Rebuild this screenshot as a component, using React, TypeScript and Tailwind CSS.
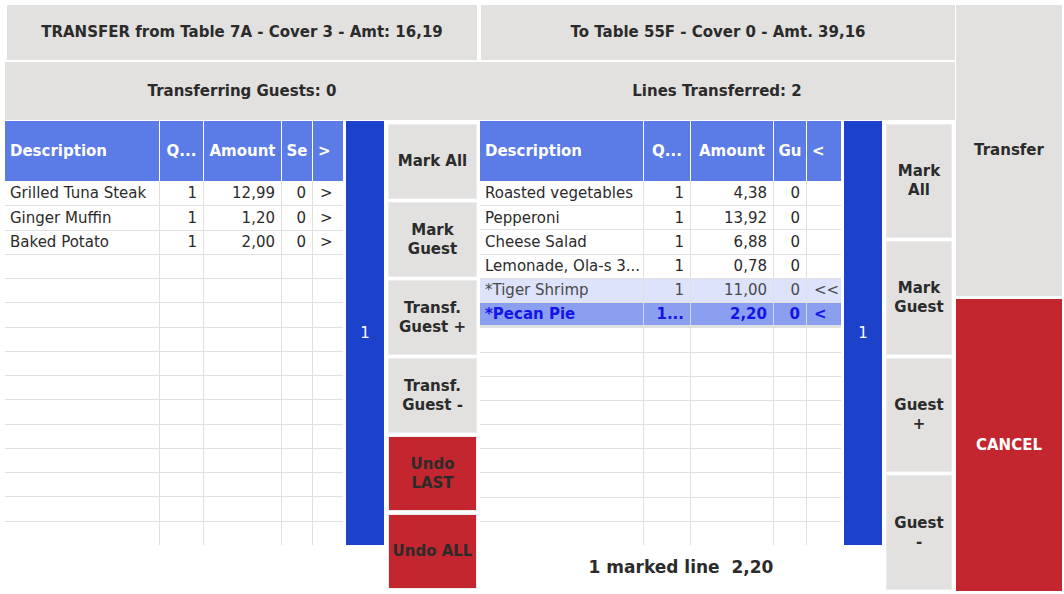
import React from 'react';

type Row = {
  desc: string;
  qty: string;
  amt: string;
  gu: string;
  arrow: string;
  kind?: 'pending' | 'marked';
};

const leftRows: Row[] = [
  { desc: 'Grilled Tuna Steak', qty: '1', amt: '12,99', gu: '0', arrow: '>' },
  { desc: 'Ginger Muffin', qty: '1', amt: '1,20', gu: '0', arrow: '>' },
  { desc: 'Baked Potato', qty: '1', amt: '2,00', gu: '0', arrow: '>' },
];

const rightRows: Row[] = [
  { desc: 'Roasted vegetables', qty: '1', amt: '4,38', gu: '0', arrow: '' },
  { desc: 'Pepperoni', qty: '1', amt: '13,92', gu: '0', arrow: '' },
  { desc: 'Cheese Salad', qty: '1', amt: '6,88', gu: '0', arrow: '' },
  { desc: 'Lemonade, Ola-s 3...', qty: '1', amt: '0,78', gu: '0', arrow: '' },
  { desc: '*Tiger Shrimp', qty: '1', amt: '11,00', gu: '0', arrow: '<<', kind: 'pending' },
  { desc: '*Pecan Pie', qty: '1...', amt: '2,20', gu: '0', arrow: '<', kind: 'marked' },
];

const font = "font-['DejaVu_Sans',sans-serif]";

interface GridProps {
  cols: string;
  heads: string[];
  rows: Row[];
}

const ItemGrid: React.FC<GridProps> = ({ cols, heads, rows }) => {
  const filled: (Row | null)[] = [...rows];
  while (filled.length < 15) filled.push(null);

  return (
    <div className="flex flex-col">
      <div className={`grid ${cols} h-[60px] bg-[#5b7be6] text-white font-bold text-[15px]`}>
        {heads.map((h, i) => (
          <div
            key={i}
            className={`flex items-center ${i === 0 ? 'pl-[5px]' : 'justify-center'} ${
              i < heads.length - 1 ? 'border-r border-white' : ''
            } ${i === heads.length - 1 ? 'justify-start pl-[5px]' : ''}`}
          >
            {h}
          </div>
        ))}
      </div>
      <div className="grid grid-rows-[repeat(15,1fr)] h-[364px]">
        {filled.map((r, i) => {
          const bg =
            r?.kind === 'pending'
              ? 'bg-[#dde3fa] text-[#4a4a4a]'
              : r?.kind === 'marked'
              ? 'bg-[#8a9fef] text-[#1414e6] font-bold border-b-2 border-[#b7c4f5]'
              : 'text-[#2b2b2b]';
          const line = r?.kind === 'marked' ? 'border-white/60' : 'border-[#e0e0e0]';
          return (
            <div
              key={i}
              className={`grid ${cols} text-[15px] ${bg} ${i > 0 ? 'border-t border-[#e0e0e0]' : ''}`}
            >
              <div className={`flex items-center pl-[5px] border-r ${line} whitespace-nowrap overflow-hidden`}>
                {r?.desc}
              </div>
              <div className={`flex items-center justify-end pr-[6px] border-r ${line}`}>{r?.qty}</div>
              <div className={`flex items-center justify-end pr-[6px] border-r ${line}`}>{r?.amt}</div>
              <div className={`flex items-center justify-end pr-[6px] border-r ${line}`}>{r?.gu}</div>
              <div className="flex items-center pl-[7px]">{r?.arrow}</div>
            </div>
          );
        })}
      </div>
    </div>
  );
};

const Scroll: React.FC = () => (
  <div className="h-[424px] bg-[#1c41cb] text-white text-[15px] flex items-center justify-center">1</div>
);

const Btn: React.FC<{ children: React.ReactNode; red?: boolean; className?: string }> = ({
  children,
  red,
  className,
}) => (
  <div
    className={`flex items-center justify-center text-center font-bold text-[15px] leading-[19px] border border-[#ececec] ${
      red ? 'bg-[#c3262f] text-[#2b2b2b]' : 'bg-[#e2e1df] text-[#2b2b2b]'
    } ${className ?? ''}`}
  >
    {children}
  </div>
);

export default function App() {
  return (
    <div className={`w-[1064px] h-[594px] bg-white overflow-hidden flex gap-[1px] pt-[5px] pl-[5px] ${font}`}>
      <div className="w-[950px] flex flex-col">
        <div className="flex gap-[4px] pl-[2px] h-[55px] text-[15px] font-bold text-[#2b2b2b]">
          <div className="w-[470px] bg-[#e2e1df] flex items-center justify-center">
            TRANSFER from Table 7A - Cover 3 - Amt: 16,19
          </div>
          <div className="flex-1 bg-[#e2e1df] flex items-center justify-center">
            To Table 55F - Cover 0 - Amt. 39,16
          </div>
        </div>
        <div className="mt-[2px] h-[58px] bg-[#e2e1df] flex text-[15px] font-bold text-[#2b2b2b]">
          <div className="w-[474px] flex items-center justify-center">Transferring Guests: 0</div>
          <div className="flex-1 flex items-center justify-center">Lines Transferred: 2</div>
        </div>
        <div className="mt-[1px] flex">
          <div className="w-[338px]">
            <ItemGrid
              cols="grid-cols-[155px_44px_78px_31px_30px]"
              heads={['Description', 'Q...', 'Amount', 'Se', '>']}
              rows={leftRows}
            />
          </div>
          <div className="ml-[3px] w-[38px]">
            <Scroll />
          </div>
          <div className="ml-[4px] w-[89px] pt-[3px] flex flex-col gap-[3px]">
            <Btn className="h-[75px]">Mark All</Btn>
            <Btn className="h-[75px]">
              Mark
              <br />
              Guest
            </Btn>
            <Btn className="h-[75px]">
              Transf.
              <br />
              Guest +
            </Btn>
            <Btn className="h-[75px]">
              Transf.
              <br />
              Guest -
            </Btn>
            <Btn red className="h-[75px]">
              Undo
              <br />
              LAST
            </Btn>
            <Btn red className="h-[75px]">Undo ALL</Btn>
          </div>
          <div className="ml-[3px] w-[402px] flex flex-col">
            <div className="flex">
              <div className="w-[361px]">
                <ItemGrid
                  cols="grid-cols-[164px_47px_83px_33px_34px]"
                  heads={['Description', 'Q...', 'Amount', 'Gu', '<']}
                  rows={rightRows}
                />
              </div>
              <div className="ml-[3px] w-[38px]">
                <Scroll />
              </div>
            </div>
            <div className="flex-1 flex items-center justify-center text-[17px] font-bold text-[#2b2b2b] whitespace-pre">
              1 marked line  2,20
            </div>
          </div>
          <div className="ml-[4px] w-[66px] pt-[3px] flex flex-col gap-[3px]">
            <Btn className="h-[114px]">
              Mark
              <br />
              All
            </Btn>
            <Btn className="h-[114px]">
              Mark
              <br />
              Guest
            </Btn>
            <Btn className="h-[114px]">
              Guest
              <br />+
            </Btn>
            <Btn className="h-[115px]">
              Guest
              <br />-
            </Btn>
          </div>
        </div>
      </div>
      <div className="w-[106px] flex flex-col gap-[3px]">
        <div className="h-[291px] bg-[#e2e1df] flex items-center justify-center font-bold text-[15px] text-[#2b2b2b]">
          Transfer
        </div>
        <div className="h-[292px] bg-[#c3262f] flex items-center justify-center font-bold text-[15px] text-white">
          CANCEL
        </div>
      </div>
    </div>
  );
}
